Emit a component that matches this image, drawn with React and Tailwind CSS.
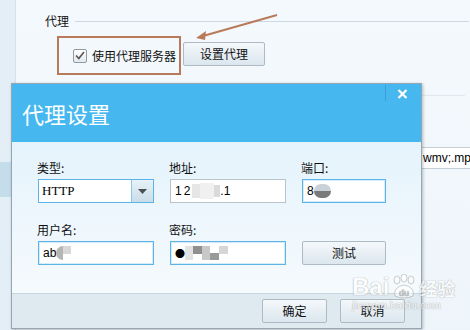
import React from 'react';

const font = { fontFamily: '"Noto Sans CJK SC", "Liberation Sans", sans-serif' };

const Field = ({ label, width = 'w-[116px]', blue = false, children }) => (
  <div className={`flex flex-col ${width}`}>
    <div className="h-[16px] mb-[3px] text-[12px] leading-[16px] text-[#111] -ml-px">{label}</div>
    <div
      className={`h-[24px] bg-white flex items-center pl-[4px] text-[12px] text-black overflow-hidden ${
        blue ? 'border border-[#5cb4e6] shadow-[inset_0_0_0_1px_#d6ecf8]' : 'border border-[#b9c4cc]'
      }`}
    >
      {children}
    </div>
  </div>
);

const Blur = ({ className }) => <span className={`inline-block ${className}`} />;

const GrayButton = ({ children, className = '' }) => (
  <button
    className={`h-[24px] rounded-[2px] border border-[#aebbc5] bg-gradient-to-b from-[#f4f8fb] to-[#dbe6ee] text-[12px] text-[#111] ${className}`}
  >
    {children}
  </button>
);

export default function App() {
  return (
    <div className="relative w-[470px] h-[330px] overflow-hidden flex bg-gradient-to-b from-[#f4f9fd] to-[#eef5fa]" style={font}>
      {/* left strip */}
      <div className="w-[16px] shrink-0 bg-[#e3eef6] border-r border-[#d5e2eb] flex flex-col">
        <div className="mt-[162px] h-[35px] bg-[#c5dceb]" />
      </div>

      {/* background settings page */}
      <div className="flex-1 pt-[14px] pl-[29px] flex flex-col">
        <div className="flex items-center h-[14px]">
          <span className="text-[12px] leading-[14px] text-[#111]">代理</span>
          <div className="flex-1 h-px bg-[#cdd9e2] ml-[6px] mr-[10px]" />
        </div>
        <div className="mt-[8px] ml-[12px] flex items-center">
          <div className="w-[124px] h-[39px] border-2 border-[#b97a5a] flex items-center pl-[14px]">
            <span className="w-[14px] h-[14px] border border-[#8f9aa3] rounded-[2px] bg-gradient-to-b from-white to-[#e4e9ed] flex items-center justify-center">
              <svg width="10" height="9" viewBox="0 0 10 9">
                <path d="M1 4.5 L3.8 7.5 L9 1" fill="none" stroke="#555" strokeWidth="1.6" />
              </svg>
            </span>
            <span className="ml-[5px] text-[12px] leading-[14px] text-[#111] whitespace-nowrap">使用代理服务器</span>
          </div>
          <GrayButton className="ml-[2px] w-[82px] -mt-[3px]">设置代理</GrayButton>
        </div>
        <div className="mt-[20px] ml-[375px] w-[45px] h-px bg-[#e0e8ee]" />
        <div className="mt-[51px] ml-[376px] h-[22px] border border-[#c3ced6] bg-white flex items-center pl-px text-[12px] text-black whitespace-nowrap" style={{ fontFamily: '"Liberation Sans", sans-serif' }}>
          wmv;.mp4
        </div>
      </div>

      {/* arrow annotation */}
      <svg className="absolute left-0 top-0" width="470" height="330" viewBox="0 0 470 330">
        <line x1="277" y1="15" x2="203" y2="36" stroke="#b97a5a" strokeWidth="2" />
        <path d="M196 38 L206 31 L205 40 Z" fill="#b97a5a" />
      </svg>

      {/* proxy dialog */}
      <div className="absolute left-[11px] top-[83px] w-[411px] h-[246px] border border-[#94a6b3] shadow-[1px_1px_3px_rgba(0,0,0,0.25)] flex flex-col">
        <div className="relative h-[58px] bg-[#47b8ef] flex items-center pl-[10px]">
          <span className="text-[22px] leading-[24px] text-white">代理设置</span>
          <div className="absolute left-[373px] top-[1px] h-[16px] w-px bg-[#3a9fd6]" />
          <svg className="absolute left-[385px] top-[5px]" width="11" height="10" viewBox="0 0 11 10">
            <path d="M1.5 1 L9.5 9 M9.5 1 L1.5 9" stroke="white" strokeWidth="2.2" />
          </svg>
        </div>

        <div className="h-[151px] bg-gradient-to-b from-[#e5f3fc] to-[#f5fafd] pt-[18px] pl-[26px] flex flex-col gap-[19px]">
          <div className="flex gap-[16px]">
            <div className="flex flex-col w-[116px]">
              <div className="h-[16px] mb-[3px] text-[12px] leading-[16px] text-[#111] -ml-px">类型:</div>
              <div className="h-[24px] flex border border-[#5cb4e6] bg-white">
                <div className="flex-1 flex items-center pl-[3px] text-[13px] text-black" style={{ fontFamily: '"Liberation Serif", serif' }}>
                  HTTP
                </div>
                <div className="w-[22px] border-l border-[#8cc6e8] bg-gradient-to-b from-[#e8f2f8] to-[#c9dde9] flex items-center justify-center">
                  <svg width="9" height="5" viewBox="0 0 9 5">
                    <path d="M0 0 L9 0 L4.5 5 Z" fill="#4a4f54" />
                  </svg>
                </div>
              </div>
            </div>
            <Field label="地址:">
              <span className="tracking-[2px]" style={{ fontFamily: '"Liberation Sans", sans-serif' }}>12</span>
              <Blur className="w-[8px] h-[14px] bg-[#e6e6e6]" />
              <Blur className="w-[14px] h-[16px] bg-[#f0f0f0]" />
              <Blur className="w-[6px] h-[12px] bg-[#dadada]" />
              <span style={{ fontFamily: '"Liberation Sans", sans-serif' }}>.1</span>
            </Field>
            <Field label="端口:" width="w-[84px]" blue>
              <span style={{ fontFamily: '"Liberation Sans", sans-serif' }}>8</span>
              <Blur className="w-[17px] h-[14px] rounded-full bg-gradient-to-b from-[#c9d2d8] to-[#7a7a7a] from-50% to-50%" />
            </Field>
          </div>

          <div className="flex gap-[16px]">
            <Field label="用户名:" blue>
              <span style={{ fontFamily: '"Liberation Sans", sans-serif' }}>ab</span>
              <Blur className="w-[7px] h-[14px] rounded-l-full bg-[#b5b5b5]" />
              <Blur className="w-[8px] h-[8px] -mt-[6px] bg-[#d8d8d8]" />
            </Field>
            <Field label="密码:" blue>
              <span className="text-[10px]">●</span>
              <Blur className="w-[8px] h-[14px] bg-[#e2e2e2]" />
              <Blur className="w-[9px] h-[8px] -mt-[6px] bg-[#8f8f8f]" />
              <Blur className="w-[8px] h-[14px] bg-[#c8c8c8]" />
              <Blur className="w-[9px] h-[7px] mt-[6px] bg-[#9a9a9a]" />
              <Blur className="w-[9px] h-[8px] -mt-[6px] bg-[#d6d6d6]" />
            </Field>
            <div className="flex flex-col w-[84px]">
              <div className="h-[16px] mb-[3px]" />
              <GrayButton className="w-full">测试</GrayButton>
            </div>
          </div>
        </div>

        <div className="flex-1 border-t border-[#c8d5de] bg-[#dfe9f0] flex justify-end gap-[13px] pt-[5px] pr-[16px]">
          <GrayButton className="w-[65px] h-[23px]">确定</GrayButton>
          <GrayButton className="w-[65px] h-[23px]">取消</GrayButton>
        </div>
      </div>

      {/* watermark */}
      <div className="absolute left-[352px] top-[274px] flex flex-col items-start pointer-events-none opacity-60">
        <div className="flex items-end text-white [text-shadow:0_0_1px_#888,0_0_1px_#888]">
          <span className="text-[24px] leading-[26px] font-bold" style={{ fontFamily: '"Liberation Sans", sans-serif' }}>Bai</span>
          <svg width="28" height="26" viewBox="0 0 28 26" className="mx-[1px]">
            <g fill="white" stroke="#999" strokeWidth="0.8">
              <ellipse cx="7" cy="6" rx="3" ry="4" />
              <ellipse cx="14" cy="4" rx="3" ry="4" />
              <ellipse cx="21" cy="6" rx="3" ry="4" />
              <path d="M5 22 Q3 13 14 11 Q25 13 23 22 Q14 26 5 22 Z" />
            </g>
            <text x="14" y="22" textAnchor="middle" fontSize="9" fill="#aaa" fontFamily="Liberation Sans">du</text>
          </svg>
          <span className="text-[18px] leading-[24px] font-bold">经验</span>
        </div>
        <div className="text-[11px] leading-[12px] text-white [text-shadow:0_0_1px_#888,0_0_1px_#888] -mt-px" style={{ fontFamily: '"Liberation Sans", sans-serif' }}>
          jingyan.baidu.com
        </div>
      </div>
    </div>
  );
}
